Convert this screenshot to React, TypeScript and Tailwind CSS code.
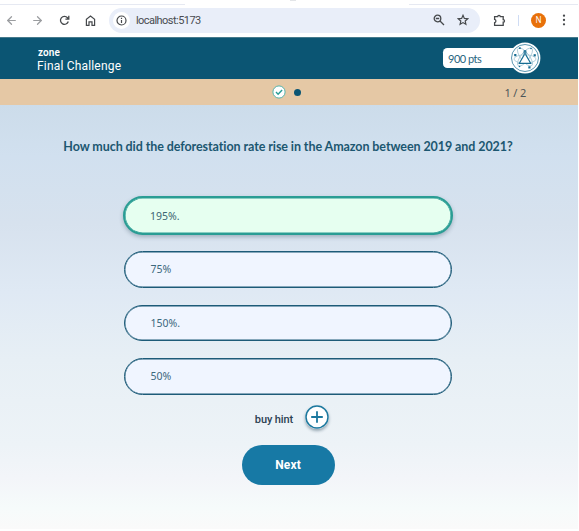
import { ArrowLeft, ArrowRight } from "lucide-react";

const answers = ["195%.", "75%", "150%.", "50%"];

function BrowserBar() {
  return (
    <div className="relative flex h-[37px] shrink-0 items-center bg-white pt-[3px] text-[#46494c]">
      <div className="absolute left-0 top-[4px] h-px w-[185px] bg-[#e6e9f2]" />
      <div className="absolute right-0 top-[4px] h-px w-[169px] bg-[#e6e9f2]" />
      <div className="absolute left-[290px] top-0 h-px w-[6px] bg-[#e3e5e8]" />
      <ArrowLeft className="ml-[5px] size-[13px] text-[#9b9da0]" strokeWidth={2.3} />
      <ArrowRight className="ml-[13px] size-[13px] text-[#9b9da0]" strokeWidth={2.3} />
      <svg className="ml-[15px] size-[11px]" viewBox="0 0 11 11" fill="none" stroke="currentColor" strokeWidth="1.3">
        <path d="M9.3 6.5A4 4 0 1 1 8.5 2.7L9.6 4M9.8.8v3.4H6.4" />
      </svg>
      <svg className="ml-[15px] size-[11px]" viewBox="0 0 11 11" fill="none" stroke="currentColor" strokeWidth="1.2">
        <path d="M1.4 10.3V4.4L5.5 1l4.1 3.4v5.9H7V6.8H4v3.5Z" />
      </svg>
      <div className="ml-[13px] flex h-[25px] w-[371px] items-center rounded-full bg-[#e9eef9] pl-1">
        <div className="flex size-[17px] items-center justify-center rounded-full bg-white">
          <svg className="size-[11px]" viewBox="0 0 11 11" fill="none" stroke="currentColor" strokeWidth="1.2">
            <circle cx="5.5" cy="5.5" r="4.5" />
            <path d="M5.5 5v3M5.5 2.8V4" />
          </svg>
        </div>
        <span className="ml-[6px] font-[Roboto,sans-serif] text-[11px] leading-none tracking-[-0.55px] text-[#484b50]">localhost:5173</span>
        <svg className="ml-auto size-[12px]" viewBox="0 0 12 12" fill="none" stroke="currentColor" strokeWidth="1.3">
          <circle cx="4.5" cy="4.5" r="3.3" />
          <path d="M2.8 4.5h3.4M7 7l4 4" />
        </svg>
        <svg className="ml-[12px] mr-[11px] size-[12px]" viewBox="0 0 12 12" fill="none" stroke="currentColor" strokeWidth="1.2">
          <path d="M6 1.3l1.35 3.1 3.35.35-2.5 2.25.7 3.3L6 8.6l-2.9 1.7.7-3.3-2.5-2.25 3.35-.35Z" />
        </svg>
      </div>
      <svg className="ml-[13px] size-[13px]" viewBox="0 0 13 13" fill="none" stroke="currentColor" strokeWidth="1.3">
        <path d="M1.6 2.7h3.1a1.2 1.2 0 0 1 2.6 0h2.9v2.9a1.2 1.2 0 0 1 0 2.6v3.1H1.6V8.7a1.7 1.7 0 0 0 0-3.3Z" />
      </svg>
      <div className="ml-[12px] h-[11px] w-px bg-[#cfdcf4]" />
      <div className="ml-[12px] flex size-[15px] items-center justify-center rounded-full bg-[#e8710a] text-[8px] leading-none text-white">N</div>
      <svg className="ml-[15px] h-[12px] w-[6px]" viewBox="0 0 6 12" fill="currentColor">
        <circle cx="3" cy="1.7" r="1.15" />
        <circle cx="3" cy="6" r="1.15" />
        <circle cx="3" cy="10.3" r="1.15" />
      </svg>
    </div>
  );
}

function ScienceBadge() {
  return (
    <svg className="absolute -right-[1px] -top-[6px] size-[32px]" viewBox="0 0 32 32" fill="none">
      <circle cx="16" cy="16" r="15.4" fill="white" />
      <circle cx="16" cy="16" r="13.5" stroke="#317c9d" strokeWidth=".8" />
      <g stroke="#8db9cb" strokeWidth=".65">
        <ellipse cx="16" cy="15" rx="4.2" ry="11" transform="rotate(38 16 15)" />
        <ellipse cx="16" cy="15" rx="4.2" ry="11" transform="rotate(-38 16 15)" />
        <ellipse cx="16" cy="17" rx="11" ry="4.2" />
      </g>
      <path d="M14.7 8.8h2.6M15.2 9v3.8L10.3 21.3h11.4L16.8 12.8V9" fill="white" stroke="#176d92" strokeWidth="1.2" />
      <g fill="#176d92">
        <rect x="5.2" y="12" width="2.2" height="2.2" />
        <rect x="24.6" y="12.2" width="2.2" height="2.2" />
        <rect x="19.3" y="24.3" width="2.2" height="2.2" />
        <rect x="10" y="5.4" width="1.8" height="1.5" />
        <circle cx="10.5" cy="24.5" r=".8" />
        <circle cx="22" cy="6.5" r=".8" />
      </g>
    </svg>
  );
}

export default function App() {
  return (
    <div className="flex h-[531px] w-[579px] flex-col overflow-hidden bg-white pb-[2px] pr-px font-['Noto_Sans',sans-serif]">
      <BrowserBar />
      <header className="flex h-[42px] shrink-0 items-start justify-between border-t border-[#467a8c] bg-[#0b5573] pl-[37px] pr-[38px] text-white">
        <div className="pt-[8px] font-[Roboto,sans-serif]">
          <div className="pl-px text-[10px] font-semibold leading-[13px] tracking-[0.1px]">zone</div>
          <div className="text-[12px] leading-[14px] tracking-[0.18px]">Final Challenge</div>
        </div>
        <div className="relative mt-[10px] flex h-[20px] w-[97px] items-center rounded-l-[6px] rounded-r-[14px] bg-white pl-[5px] font-[Lato,sans-serif] text-[11px] leading-none tracking-[-0.5px] text-[#286580]">
          900 pts
          <ScienceBadge />
        </div>
      </header>
      <div className="grid h-[26px] shrink-0 grid-cols-3 items-center bg-[#e5c8a5]">
        <div className="col-start-2 flex items-center pl-[79px]">
          <svg className="size-[14px]" viewBox="0 0 14 14" fill="none">
            <circle cx="7" cy="7" r="6.1" fill="white" stroke="#55b5ae" />
            <path d="m4 7.1 2.1 2.1 4-4.3" stroke="#269c96" strokeWidth="1.4" />
          </svg>
          <div className="ml-[8px] size-[7px] rounded-full bg-[#0b5573]" />
        </div>
        <div className="pr-[52px] text-right text-[11px] leading-none tracking-[-0.2px] text-[#4c5659]">1 / 2</div>
      </div>
      <main className="flex flex-1 flex-col items-center bg-[linear-gradient(180deg,#ccdcea_0%,#d1e0ef_12%,#d7e2ee_28%,#dfe9f4_44%,#e7eff5_60%,#edf3f7_80%,#f3f5f9_88%,#f6fbfb_95%,#fafafa_100%)] pr-[2px]">
        <h1 className="mt-[33px] whitespace-nowrap font-[Lato,sans-serif] text-[12.5px] font-bold leading-[17px] tracking-[-0.08px] text-[#1c5771]">
          How much did the deforestation rate rise in the Amazon between 2019 and 2021?
        </h1>
        <div className="mt-[41px] flex w-[330px] flex-col items-center gap-[17px]">
          {answers.map((answer, index) => (
            <button
              key={answer}
              className={
                index === 0
                  ? "-mb-px h-[39px] w-[330px] rounded-full border-2 border-[#2a9d94] bg-[#e6fff0] pl-[25px] pt-[2px] text-left text-[10.5px] text-[#3c6673] shadow-[inset_0_0_0_0.6px_#2a9d94,0_2px_4px_rgba(30,60,80,0.3)]"
                  : "h-[36.6px] w-[328px] rounded-full border border-[#1d5b78] bg-[#f0f5ff] pl-[25.5px] pt-px text-left text-[10.5px] text-[#3c687d] shadow-[inset_0_0_0_0.4px_#1d5b78]"
              }
            >
              {answer}
            </button>
          ))}
        </div>
        <div className="mt-[10px] flex items-center gap-3 pl-[8px] font-[Roboto,sans-serif]">
          <span className="pt-[6px] text-[11px] font-medium leading-none tracking-[-0.1px] text-[#2c4152]">buy hint</span>
          <svg className="size-[24px] overflow-visible rounded-full shadow-[0_2px_3px_rgba(30,60,80,0.4)]" viewBox="0 0 24 24" fill="none" stroke="#1c789e">
            <circle cx="12" cy="12" r="11" fill="white" strokeWidth="1.5" />
            <path d="M12 6.2v11.6M6.2 12h11.6" strokeWidth="1.8" />
          </svg>
        </div>
        <button className="mt-[16px] h-[40px] w-[93px] rounded-full bg-[#1779a5] font-[Roboto,sans-serif] text-[12px] font-bold tracking-[0.15px] text-white">Next</button>
      </main>
    </div>
  );
}
